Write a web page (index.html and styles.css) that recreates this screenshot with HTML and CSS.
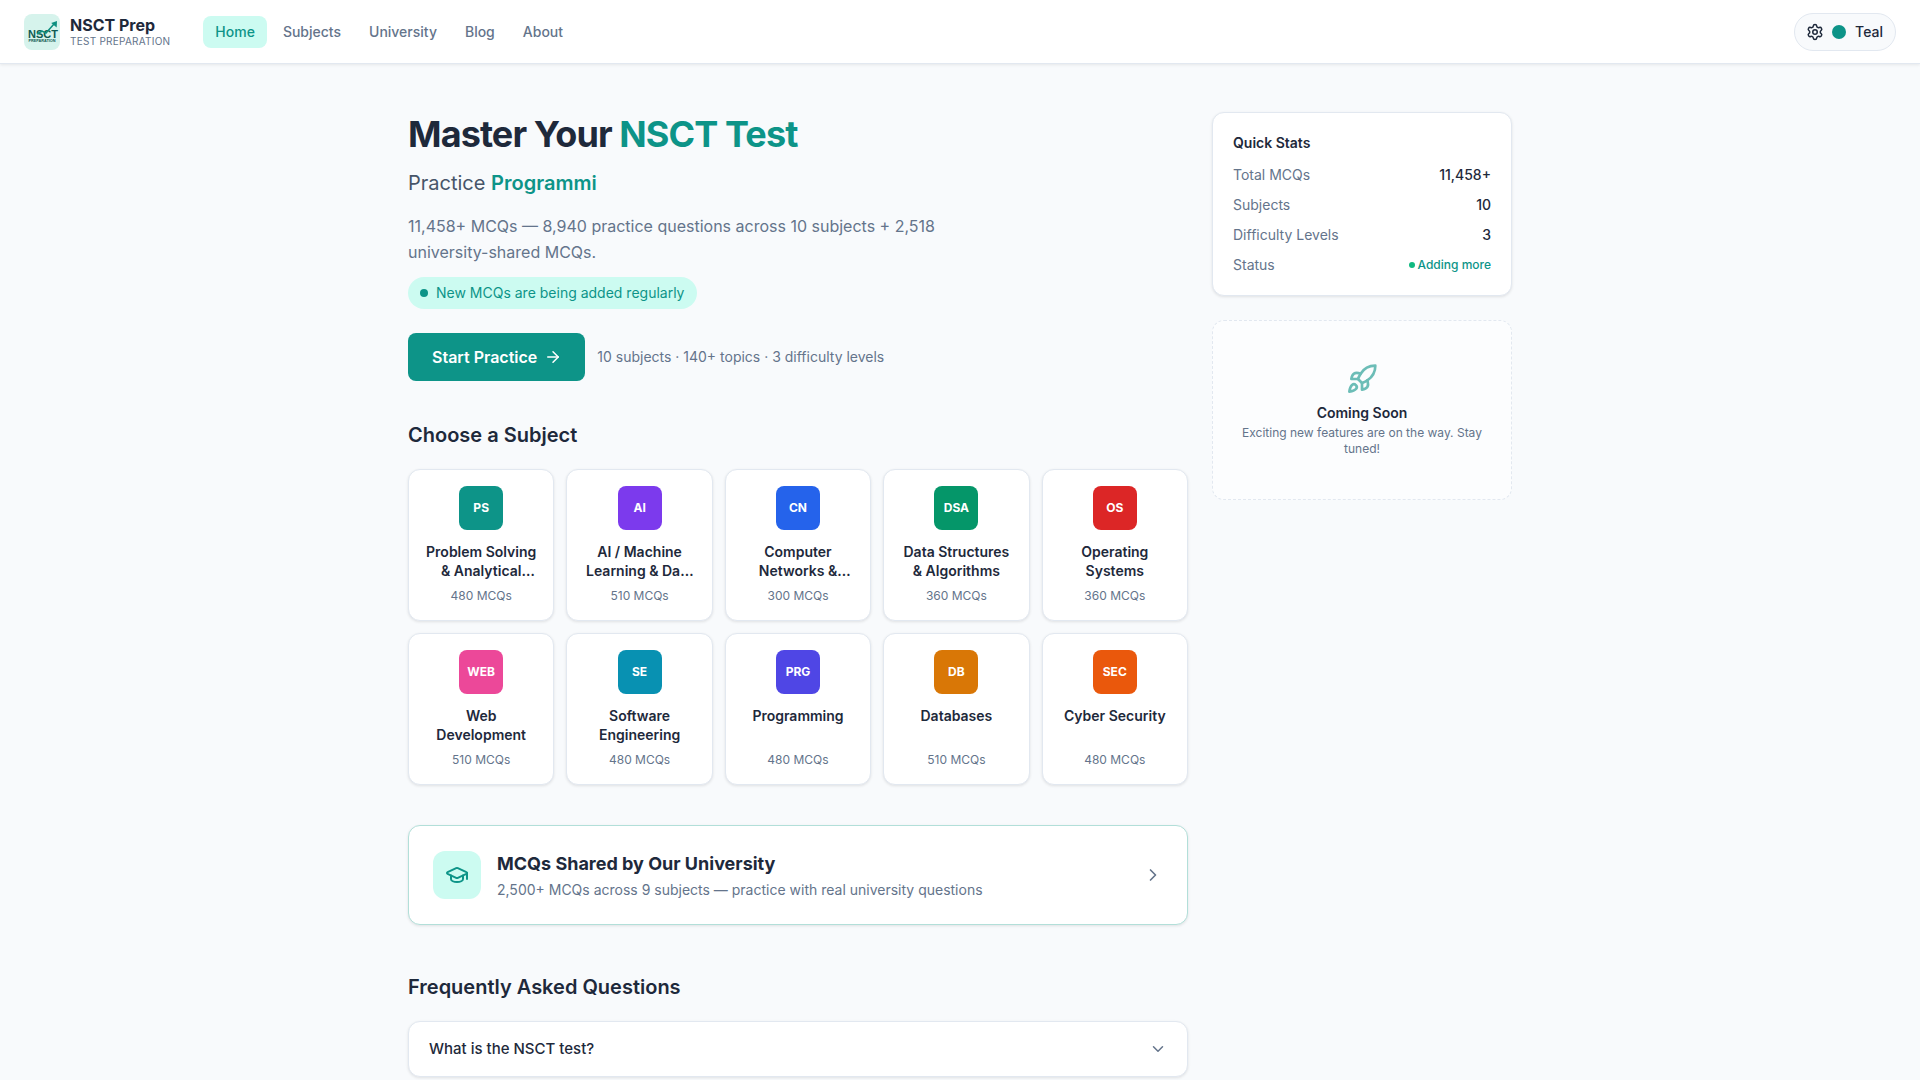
FILE: index.html
```html
<!DOCTYPE html>
<html lang="en">
<head>
    <meta charset="UTF-8">
    <meta name="viewport" content="width=device-width, initial-scale=1.0">
    <title>NSCT Prep</title>
    <link rel="stylesheet" href="styles.css">
</head>
<body>
    <header class="topbar">
        <div class="brand">
            <div class="brand-logo">
                <svg viewBox="0 0 36 36" width="36" height="36">
                    <text class="logo-word" x="4" y="23.500">NSCT</text>
                    <path class="logo-arrow" d="M13 20l5-3 4 2 8-9"/>
                    <path class="logo-head" d="M33 7l-.3 6.500-5.500-4.500z"/>
                    <text class="logo-sub" x="18" y="28" text-anchor="middle">PREPARATION</text>
                </svg>
            </div>
            <div class="brand-text">
                <div class="brand-name">NSCT Prep</div>
                <div class="brand-tag">TEST PREPARATION</div>
            </div>
        </div>
        <nav class="nav">
            <a class="nav-link active">Home</a>
            <a class="nav-link">Subjects</a>
            <a class="nav-link">University</a>
            <a class="nav-link">Blog</a>
            <a class="nav-link">About</a>
        </nav>
        <button class="theme-btn">
            <svg class="icon" viewBox="0 0 24 24" width="18" height="18"><path d="M9.671 4.136a2.340 2.340 0 0 1 4.659 0 2.340 2.340 0 0 0 3.319 1.915 2.340 2.340 0 0 1 2.330 4.033 2.340 2.340 0 0 0 0 3.831 2.340 2.340 0 0 1-2.330 4.033 2.340 2.340 0 0 0-3.319 1.915 2.340 2.340 0 0 1-4.659 0 2.340 2.340 0 0 0-3.320-1.915 2.340 2.340 0 0 1-2.330-4.033 2.340 2.340 0 0 0 0-3.831A2.340 2.340 0 0 1 6.350 6.051a2.340 2.340 0 0 0 3.319-1.915"/><circle cx="12" cy="12" r="3"/></svg>
            <span class="theme-dot"></span>
            <span>Teal</span>
        </button>
    </header>

    <div class="page">
        <main class="main-col">
            <h1 class="hero-title">Master Your <span class="teal">NSCT Test</span></h1>
            <p class="hero-sub">Practice <strong class="teal">Programmi</strong></p>
            <p class="hero-desc">11,458+ MCQs — 8,940 practice questions across 10 subjects + 2,518 university-shared MCQs.</p>
            <div class="notice"><span class="notice-dot"></span>New MCQs are being added regularly</div>
            <div class="cta-row">
                <button class="cta-btn">Start Practice
                    <svg class="icon" viewBox="0 0 24 24" width="18" height="18"><path d="M5 12h14"/><path d="m12 5 7 7-7 7"/></svg>
                </button>
                <span class="cta-note">10 subjects · 140+ topics · 3 difficulty levels</span>
            </div>

            <h2 class="section-title">Choose a Subject</h2>
            <div class="subject-grid">
                <a class="subject-card"><span class="subject-icon c-ps">PS</span><span class="subject-name">Problem Solving &amp; Analytical Thinking</span><span class="subject-count">480 MCQs</span></a>
                <a class="subject-card"><span class="subject-icon c-ai">AI</span><span class="subject-name">AI / Machine Learning &amp; Data Science</span><span class="subject-count">510 MCQs</span></a>
                <a class="subject-card"><span class="subject-icon c-cn">CN</span><span class="subject-name">Computer Networks &amp; Communication</span><span class="subject-count">300 MCQs</span></a>
                <a class="subject-card"><span class="subject-icon c-dsa">DSA</span><span class="subject-name">Data Structures &amp; Algorithms</span><span class="subject-count">360 MCQs</span></a>
                <a class="subject-card"><span class="subject-icon c-os">OS</span><span class="subject-name">Operating Systems</span><span class="subject-count">360 MCQs</span></a>
                <a class="subject-card"><span class="subject-icon c-web">WEB</span><span class="subject-name">Web Development</span><span class="subject-count">510 MCQs</span></a>
                <a class="subject-card"><span class="subject-icon c-se">SE</span><span class="subject-name">Software Engineering</span><span class="subject-count">480 MCQs</span></a>
                <a class="subject-card"><span class="subject-icon c-prg">PRG</span><span class="subject-name">Programming</span><span class="subject-count">480 MCQs</span></a>
                <a class="subject-card"><span class="subject-icon c-db">DB</span><span class="subject-name">Databases</span><span class="subject-count">510 MCQs</span></a>
                <a class="subject-card"><span class="subject-icon c-sec">SEC</span><span class="subject-name">Cyber Security</span><span class="subject-count">480 MCQs</span></a>
            </div>

            <a class="uni-card">
                <span class="uni-icon">
                    <svg class="icon" viewBox="0 0 24 24" width="24" height="24"><path d="M21.420 10.922a1 1 0 0 0-.019-1.838L12.830 5.180a2 2 0 0 0-1.660 0L2.600 9.080a1 1 0 0 0 0 1.832l8.570 3.908a2 2 0 0 0 1.660 0z"/><path d="M22 10v6"/><path d="M6 12.500V16a6 3 0 0 0 12 0v-3.500"/></svg>
                </span>
                <span class="uni-text">
                    <span class="uni-title">MCQs Shared by Our University</span>
                    <span class="uni-sub">2,500+ MCQs across 9 subjects — practice with real university questions</span>
                </span>
                <svg class="icon uni-chevron" viewBox="0 0 24 24" width="20" height="20"><path d="m9 18 6-6-6-6"/></svg>
            </a>

            <h2 class="section-title faq-title">Frequently Asked Questions</h2>
            <div class="faq-item">
                <span>What is the NSCT test?</span>
                <svg class="icon faq-chevron" viewBox="0 0 24 24" width="18" height="18"><path d="m6 9 6 6 6-6"/></svg>
            </div>
        </main>

        <aside class="side-col">
            <div class="stats-card">
                <h3 class="stats-title">Quick Stats</h3>
                <div class="stat-row"><span>Total MCQs</span><b>11,458+</b></div>
                <div class="stat-row"><span>Subjects</span><b>10</b></div>
                <div class="stat-row"><span>Difficulty Levels</span><b>3</b></div>
                <div class="stat-row"><span>Status</span><em class="stat-status"><i class="status-dot"></i>Adding more</em></div>
            </div>
            <div class="soon-card">
                <svg class="icon soon-icon" viewBox="0 0 24 24" width="32" height="32"><path d="M4.500 16.500c-1.500 1.260-2 5-2 5s3.740-.5 5-2c.71-.84.7-2.130-.09-2.910a2.180 2.180 0 0 0-2.910-.09z"/><path d="m12 15-3-3a22 22 0 0 1 2-3.950A12.880 12.880 0 0 1 22 2c0 2.720-.78 7.500-6 11a22.350 22.350 0 0 1-4 2z"/><path d="M9 12H4s.55-3.030 2-4c1.620-1.080 5 0 5 0"/><path d="M12 15v5s3.030-.55 4-2c1.080-1.620 0-5 0-5"/></svg>
                <div class="soon-title">Coming Soon</div>
                <div class="soon-text">Exciting new features are on the way. Stay tuned!</div>
            </div>
        </aside>
    </div>
</body>
</html>
```

FILE: styles.css
```css
* {
    box-sizing: border-box;
}
html, body {
    height: 1080px;
    overflow: hidden;
}
body {
    margin: 0;
    background: #f8fafc;
    font-family: Inter, "Liberation Sans", sans-serif;
    color: #1e293b;
}
h1, h2, h3, p {
    margin: 0;
}
.icon {
    fill: none;
    stroke: currentColor;
    stroke-width: 2;
    stroke-linecap: round;
    stroke-linejoin: round;
    flex-shrink: 0;
}
.teal {
    color: #0d9488;
}

/* Barra superior */
.topbar {
    display: flex;
    align-items: center;
    height: 64px;
    padding: 0 24px;
    background: #fff;
    border-bottom: 1px solid #e2e8f0;
    box-shadow: 0 1px 3px rgba(0, 0, 0, 0.08);
}
.brand {
    display: flex;
    align-items: center;
    gap: 10px;
}
.brand-logo {
    width: 36px;
    height: 36px;
    border-radius: 8px;
    background: #d6f3ec;
    overflow: hidden;
}
.logo-word {
    font-family: "Liberation Sans", sans-serif;
    font-size: 11px;
    font-weight: 700;
    fill: #0f5a52;
}
.logo-sub {
    font-family: "Liberation Sans", sans-serif;
    font-size: 3.800px;
    font-weight: 700;
    fill: #0f5a52;
}
.logo-arrow {
    fill: none;
    stroke: #0d8f7f;
    stroke-width: 1.500;
}
.logo-head {
    fill: #0d8f7f;
}
.brand-name {
    font-size: 16px;
    line-height: 18px;
    font-weight: 700;
}
.brand-tag {
    font-size: 10px;
    line-height: 14px;
    letter-spacing: 0.25px;
    color: #64748b;
}
.nav {
    display: flex;
    gap: 4px;
    margin-left: 33px;
}
.nav-link {
    padding: 6px 12px;
    font-size: 14px;
    line-height: 20px;
    font-weight: 500;
    border-radius: 8px;
    color: #64748b;
}
.nav-link.active {
    background: #ccfbf1;
    color: #0d9488;
}
.theme-btn {
    display: flex;
    align-items: center;
    gap: 8px;
    height: 38px;
    margin-left: auto;
    padding: 0 12px 0 11px;
    background: #f8fafc;
    border: 1px solid #e2e8f0;
    border-radius: 19px;
    font-family: inherit;
    font-size: 14px;
    line-height: 20px;
    font-weight: 500;
    color: #1e293b;
}
.theme-dot {
    width: 14px;
    height: 14px;
    margin-right: 1px;
    border-radius: 50%;
    background: #0d9488;
}

/* Contenido */
.page {
    display: flex;
    gap: 24px;
    width: 1104px;
    margin: 0 auto;
    padding-top: 48px;
}
.main-col {
    width: 780px;
}
.side-col {
    display: flex;
    flex-direction: column;
    gap: 24px;
    width: 300px;
}
.hero-title {
    font-size: 36px;
    line-height: 44px;
    font-weight: 700;
    letter-spacing: -0.9px;
}
.hero-sub {
    margin-top: 13px;
    font-size: 20px;
    line-height: 28px;
    color: #475569;
}
.hero-sub strong {
    font-weight: 600;
}
.hero-desc {
    max-width: 576px;
    margin-top: 16px;
    font-size: 16px;
    line-height: 26px;
    color: #64748b;
}
.notice {
    display: inline-flex;
    align-items: center;
    gap: 8px;
    height: 32px;
    margin-top: 12px;
    padding: 0 12px;
    background: #ccfbf1;
    border-radius: 16px;
    font-size: 14px;
    line-height: 20px;
    color: #0d9488;
}
.notice-dot {
    width: 8px;
    height: 8px;
    border-radius: 50%;
    background: #0d9488;
}
.cta-row {
    display: flex;
    align-items: center;
    gap: 12px;
    margin-top: 24px;
}
.cta-btn {
    display: flex;
    align-items: center;
    gap: 7px;
    height: 48px;
    padding: 0 23px 0 24px;
    background: #0d9488;
    border: none;
    border-radius: 8px;
    font-family: inherit;
    font-size: 16px;
    font-weight: 600;
    color: #fff;
}
.cta-note {
    font-size: 14px;
    line-height: 20px;
    color: #64748b;
}
.section-title {
    margin-top: 40px;
    font-size: 20px;
    line-height: 28px;
    font-weight: 600;
}
.subject-grid {
    display: grid;
    grid-template-columns: repeat(5, 1fr);
    gap: 12px;
    margin-top: 20px;
}
.subject-card {
    display: flex;
    flex-direction: column;
    align-items: center;
    height: 152px;
    padding: 16px;
    background: #fff;
    border: 1px solid #e2e8f0;
    border-radius: 12px;
    box-shadow: 0 1px 3px rgba(0, 0, 0, 0.1);
    text-align: center;
}
.subject-icon {
    display: flex;
    align-items: center;
    justify-content: center;
    flex-shrink: 0;
    width: 44px;
    height: 44px;
    border-radius: 8px;
    font-size: 12px;
    line-height: 16px;
    font-weight: 700;
    color: #fff;
}
.subject-name {
    display: -webkit-box;
    -webkit-box-orient: vertical;
    -webkit-line-clamp: 2;
    overflow: hidden;
    flex-shrink: 0;
    height: 38.500px;
    margin-top: 12px;
    font-size: 14px;
    line-height: 19.250px;
    font-weight: 600;
}
.subject-count {
    margin-top: 7px;
    font-size: 12px;
    line-height: 16px;
    color: #64748b;
}
.c-ps { background: #0d9488; }
.c-ai { background: #7c3aed; }
.c-cn { background: #2563eb; }
.c-dsa { background: #059669; }
.c-os { background: #dc2626; }
.c-web { background: #ec4899; }
.c-se { background: #0891b2; }
.c-prg { background: #4f46e5; }
.c-db { background: #d97706; }
.c-sec { background: #ea580c; }

.uni-card {
    display: flex;
    align-items: center;
    gap: 16px;
    height: 100px;
    margin-top: 40px;
    padding: 0 24px;
    background: #fff;
    border: 1px solid #b2dfd9;
    border-radius: 12px;
    box-shadow: 0 1px 3px rgba(0, 0, 0, 0.1);
}
.uni-icon {
    display: flex;
    align-items: center;
    justify-content: center;
    width: 48px;
    height: 48px;
    background: #ccfbf1;
    border-radius: 12px;
    color: #0d9488;
}
.uni-text {
    display: flex;
    flex-direction: column;
    gap: 4px;
    flex: 1;
    padding-top: 1px;
}
.uni-title {
    font-size: 18px;
    line-height: 24px;
    font-weight: 700;
}
.uni-sub {
    font-size: 14px;
    line-height: 20px;
    color: #64748b;
}
.uni-chevron {
    color: #64748b;
}
.faq-title {
    margin-top: 48px;
}
.faq-item {
    display: flex;
    align-items: center;
    justify-content: space-between;
    height: 56px;
    margin-top: 20px;
    padding: 0 20px;
    background: #fff;
    border: 1px solid #e2e8f0;
    border-radius: 12px;
    box-shadow: 0 1px 3px rgba(0, 0, 0, 0.1);
    font-size: 15px;
    line-height: 22px;
    font-weight: 500;
}
.faq-chevron {
    color: #64748b;
}

/* Columna lateral */
.stats-card {
    padding: 20px;
    background: #fff;
    border: 1px solid #e2e8f0;
    border-radius: 12px;
    box-shadow: 0 1px 3px rgba(0, 0, 0, 0.1);
}
.stats-title {
    margin-bottom: 12px;
    font-size: 14px;
    line-height: 20px;
    font-weight: 600;
}
.stat-row {
    display: flex;
    align-items: center;
    justify-content: space-between;
    height: 20px;
    margin-top: 10px;
    font-size: 14px;
    line-height: 20px;
    color: #64748b;
}
.stats-title + .stat-row {
    margin-top: 0;
}
.stat-row b {
    font-weight: 500;
    color: #1e293b;
}
.stat-status {
    display: flex;
    align-items: center;
    gap: 3px;
    font-size: 12px;
    line-height: 16px;
    font-style: normal;
    font-weight: 500;
    color: #0d9488;
}
.status-dot {
    width: 6px;
    height: 6px;
    border-radius: 50%;
    background: #10b981;
}
.soon-card {
    display: flex;
    flex-direction: column;
    align-items: center;
    height: 180px;
    padding: 42px 24px 0;
    background: rgba(255, 255, 255, 0.5);
    border: 1px dashed #e2e8f0;
    border-radius: 12px;
    text-align: center;
}
.soon-icon {
    color: #0d9488;
    opacity: 0.6;
}
.soon-title {
    margin-top: 8px;
    font-size: 14px;
    line-height: 20px;
    font-weight: 600;
}
.soon-text {
    margin-top: 2px;
    font-size: 12px;
    line-height: 16px;
    color: #64748b;
}
```
